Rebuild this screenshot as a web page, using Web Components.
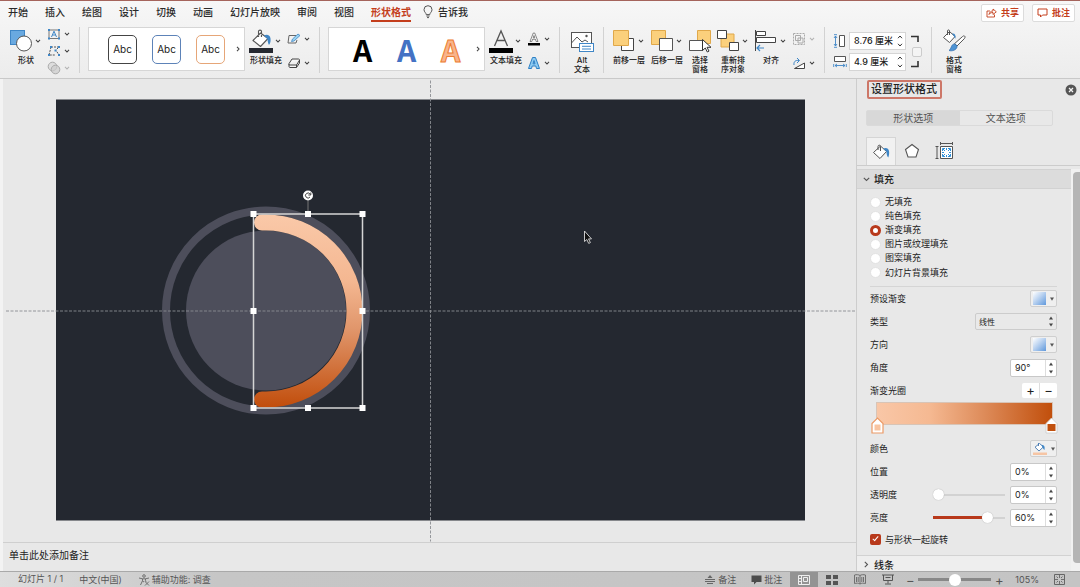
<!DOCTYPE html>
<html lang="zh-CN">
<head>
<meta charset="utf-8">
<title>设置形状格式</title>
<style>
html,body{margin:0;height:100%;overflow:hidden}
body{font:9px/14px Inter,"Noto Sans CJK SC",sans-serif;color:#222;background:#e8e8e8}
</style>
</head>
<body>
<deck-app></deck-app>
<script>
const BLUE = '#3f86c6', LINE = '#4a4a4a', GOLD = '#fbd07c';
const ICONS = {
  bulb: [10, 14, `<path d="M3.2 9.6C3.2 7.8 1 7 1 4.7a4 4 0 0 1 8 0C9 7 6.800 7.800 6.800 9.600zM3.400 11h3.200M4 12.600h2" fill="none" stroke="#555"/>`],
  share: [11, 10, `<path d="M4 3H1v6h7.500V6.500M3 6.500C3.500 4 5 3 7 3V1l3.300 2.800L7 6.500v-2C5.300 4.500 4 5 3 6.500z" fill="none" stroke="#c43e1c" stroke-width=".9"/>`],
  comment: [11, 10, `<path d="M1 1h9v6H5.500L3.500 9V7H1z" fill="none" stroke="#c43e1c"/>`],
  chev: [6, 4, `<path d="M1 .8 3 3 5 .8" fill="none" stroke="#444" stroke-width="1.100"/>`],
  chevOff: [6, 4, `<path d="M1 .8 3 3 5 .8" fill="none" stroke="#b4b4b4" stroke-width="1.100"/>`],
  next: [4, 6, `<path d="M1 .8 3 3 1 5.200" fill="none" stroke="#444" stroke-width="1.100"/>`],
  shapes: [24, 24, `<rect x="1.500" y="1.500" width="14" height="14" fill="#69a9e0" stroke="${BLUE}"/><circle cx="15" cy="14.500" r="7.500" fill="#fff" stroke="#555"/>`],
  textbox: [14, 12, `<rect x="2" y="2" width="10" height="8.500" fill="none" stroke="#777"/><path d="M4.500 9 7 3.200 9.500 9M5.400 7h3.200" fill="none" stroke="${BLUE}"/><path d="M1 1h2v2H1zM11 1h2v2h-2zM1 9.500h2v2H1zM11 9.500h2v2h-2z" fill="${BLUE}"/>`],
  points: [14, 12, `<path d="M4 2h8L8.500 5.500C10 6 10.500 8 12 10M4 2 2 10h6" fill="none" stroke="#555" stroke-dasharray="2 1"/><path d="M3 1h2v2H3zM11 1h2v2h-2zM1 9h2v2H1zM11 9h2v2h-2zM7.500 4.500h2v2h-2z" fill="${BLUE}"/>`],
  merge: [14, 14, `<circle cx="5.500" cy="5.500" r="4.300" fill="#ddd" stroke="#aaa"/><circle cx="8.500" cy="8.500" r="4.300" fill="#ccc" fill-opacity=".7" stroke="#aaa"/>`],
  bucket: [24, 24, `<path d="M11.500 4 4 11.500l7.500 6L19 9.500zM9.500 8V2.500c0-1.800 3-1.800 3 0V8" fill="#fff" stroke="#555" stroke-width="1.100" stroke-linejoin="round"/><path d="M15 6.500c3-1.500 6-.5 6.500 3 .3 2.500 0 4.500-1.500 6.500-1.500-2-1-5-2-6.500z" fill="${BLUE}"/><path d="M0 19h24v5H0z" fill="#252830"/>`],
  outline: [14, 12, `<path d="M9 2.500H2L1 10h8l1-3" fill="none" stroke="#666"/><path d="M4.500 8.500 5.500 6 11 1l2 1.500L7 8z" fill="#9bd3f0" stroke="${BLUE}" stroke-width=".8"/>`],
  effect: [14, 12, `<path d="M5 2h6.500c1 0 1.200.8.800 1.500L9.500 8H3C1.800 8 1.600 7.300 2 6.600zM2 7v2.500c0 .5.500 1 1 1h6.500L12.500 6V3M9.500 8v2.500" fill="#f5f5f5" stroke="#444" stroke-linejoin="round"/>`],
  textfill: [24, 24, `<path d="M5.500 17 12 2l6.500 15M8 11.500h8" fill="none" stroke="#555" stroke-width="1.300"/><path d="M0 19h24v5H0z" fill="#000"/>`],
  textline: [14, 14, `<path d="M3 9.500 6.300 1h1.400L11 9.500H9.200L8.400 7.200H5.600L4.800 9.500zM6.200 5.800h1.600L7 3.500z" fill="#fff" stroke="#555" stroke-width=".7"/><path d="M1 11h12v2.500H1z" fill="#000"/>`],
  texteffect: [14, 14, `<path d="M1.500 12.500 5.500 1.500h3l4 11h-3L8.800 10H5.200l-.7 2.500zM6 7.800h2L7 4.500z" fill="#8ecbf2" stroke="#2d7fc4"/>`],
  alt: [24, 24, `<rect x="1.500" y="3.500" width="20" height="15" fill="#fff" stroke="#555"/><path d="M1.500 14 7 8l5 5 3-2 3 2" fill="none" stroke="#555"/><circle cx="16.500" cy="7" r="1.200" fill="#555"/><rect x="9.500" y="14.500" width="14" height="8" fill="#fff" stroke="${BLUE}"/><path d="M12 17.300h9M12 20h9" stroke="${BLUE}"/>`],
  front: [24, 24, `<path d="M9.500 9.500h12v12h-12z" fill="#fff" stroke="#444"/><path d="M1.500 1.500h15v15h-15z" fill="${GOLD}" stroke="#e0a84a"/>`],
  back: [24, 24, `<path d="M1.500 1.500h14v14h-14z" fill="${GOLD}" stroke="#e0a84a"/><path d="M9.500 9.500h13v12h-13z" fill="#fff" stroke="#555"/>`],
  select: [24, 24, `<path d="M9.500 1.500h13v13h-13z" fill="${GOLD}" stroke="#e0a84a"/><path d="M1.500 11.500h13v10h-13z" fill="#fff" stroke="#555"/><path d="M14.500 10.500v11l2.800-2.500 2 4 1.700-.9-2-3.800h4z" fill="#fff" stroke="#333"/>`],
  reorder: [24, 24, `<path d="M5 5h13v13H5z" fill="${GOLD}" stroke="#e0a84a"/><path d="M1.500 1.500h9v8h-9zM13.500 13.500h9v8h-9z" fill="#fff" stroke="#444"/>`],
  align: [24, 24, `<path d="M1.500 1v21" stroke="#444"/><path d="M2.500 2.500h9v4h-9zM2.500 8.500h19v5h-19z" fill="#fff" stroke="#444"/><path d="M10 19H3M6 16l-3 3 3 3" fill="none" stroke="${BLUE}" stroke-width="1.200"/>`],
  group: [14, 14, `<path d="M1.500 1.500h11v11h-11z" fill="none" stroke="#aaa" stroke-dasharray="2 1"/><path d="M3.500 3.500h5v5h-5zM6 6h5v5H6z" fill="none" stroke="#aaa"/>`],
  rotate: [14, 12, `<path d="M2.500 11.500h10V6z" fill="#fff" stroke="#444"/><path d="M2 8C1.500 4.500 3.500 3 7 3.500M5 1l2.500 2.500L5 6" fill="none" stroke="${BLUE}"/>`],
  height: [14, 14, `<path d="M6.500 1.500h5v11h-5z" fill="#fff" stroke="#555"/><path d="M2.500 2v10M1 4l1.500-2L4 4M1 10l1.500 2L4 10M1 .7h3M1 13.300h3" fill="none" stroke="${BLUE}" stroke-width=".9"/>`],
  width: [14, 14, `<path d="M1.500 1.500h11v5h-11z" fill="#fff" stroke="#555"/><path d="M2 10.500h10M4 9l-2 1.500L4 12M10 9l2 1.500L10 12M.7 9v3M13.300 9v3" fill="none" stroke="${BLUE}" stroke-width=".9"/>`],
  cornerTop: [14, 7, `<path d="M1 1.500h7V7" fill="none" stroke="#333" stroke-width="1.600"/>`],
  cornerBottom: [14, 7, `<path d="M8 0v5.500H1" fill="none" stroke="#333" stroke-width="1.600"/>`],
  formatpane: [24, 24, `<path d="M7.500 2.500 1.500 8.500l6 5 5.500-6zM5.500 6V2c0-1.500 2-1.500 2 0v4" fill="#fff" stroke="#555"/><path d="M10 4.500c2.500-.5 4 1 3.500 5-1.500-.5-1-2-2-3z" fill="${BLUE}"/><path d="M22.500 7c1 .8.500 1.800-.3 2.800L15 17l-2.500-2.300L20 8c1-.8 1.700-1.500 2.500-1z" fill="#fff" stroke="#555"/><path d="M12.500 15c1.800.3 2.800 1.500 2.500 3-.5 3-5 4.500-8 3.500 2.500-1.500 2-6.500 5.500-6.500z" fill="#4f94d4" stroke="#2f6cac" stroke-width=".7"/>`],
  close: [12, 12, `<circle cx="6" cy="6" r="5.500" fill="#555"/><path d="m4 4 4 4M8 4 4 8" stroke="#f4f4f4" stroke-width="1.300"/>`],
  paint: [18, 16, `<path d="M8.500 2 1.500 8.500l6.500 6 6.500-7zM6 6V2.500c0-1.800 2.500-1.800 2.500 0V7" fill="#fff" stroke="#555" stroke-linejoin="round"/><path d="M11 4.500c3-1.300 5.500-.5 6 2.500.3 2 .2 4-.7 6.500-1.800-1.500-1.500-4.500-2-6z" fill="${BLUE}"/>`],
  pentagon: [16, 16, `<path d="M8 1.500 14.500 6.500 12 14H4L1.500 6.500z" fill="#fff" stroke="#555" stroke-width="1.100"/>`],
  sizeprops: [19, 18, `<path d="M5.500 4.500h12v12h-12z" fill="#fff" stroke="#555"/><path d="M2 4v13M.5 4.500h3M.5 16.500h3M5 1.500h13M5.500 0v3M17.500 0v3" stroke="#555"/><path d="M8 7l2 2M15 7l-2 2M8 14l2-2M15 14l-2-2M7.500 9V6.500H10M13 6.500h2.500V9M7.500 12v2.500H10M13 14.500h2.500V12M11.500 6v2M11.500 13v2M7 10.500h2M14 10.500h2" fill="none" stroke="#2f8fd6"/>`],
  swatch: [13, 13, `<defs><linearGradient id="g" x2="1" y2="1"><stop offset="0" stop-color="#fff"/><stop offset=".4" stop-color="#c3d8f2"/><stop offset="1" stop-color="#5f98dc"/></linearGradient></defs><path d="M0 0h13v13H0z" fill="url(#g)"/>`],
  tri: [4, 4, `<path d="M0 .5h4L2 3.800z" fill="#555"/>`],
  colorfill: [14, 13, `<path d="M6.500 1.500 2 5.200 6 9l4.500-4.200zM5.500 4V1" fill="#fff" stroke="#4477b0" stroke-width=".9"/><path d="M8.500 3c3 0 3.500 1.500 3 5-1.500-.8-1.300-2.200-2.200-3z" fill="${BLUE}"/><path d="M0 10.500h14V13H0z" fill="#f6c5a4"/>`],
  stopLight: [13, 17, `<path d="M1 6.500 6.500 1 12 6.500V16H1z" fill="#fff" stroke="#ec9a66" stroke-width="1.200"/><path d="M3.500 7.500h6v6h-6z" fill="#f8c4a1"/>`],
  stopDark: [13, 17, `<path d="M1 6.500 6.500 1 12 6.500V16H1z" fill="#fff" stroke="#ccc" stroke-width=".8"/><path d="M2.500 7h8v7h-8z" fill="#c1510f"/>`],
  down: [7, 5, `<path d="M.8.800 3.500 3.500 6.200.8" fill="none" stroke="#555" stroke-width="1.100"/>`],
  right: [5, 7, `<path d="M.8.800 3.500 3.500.8 6.200" fill="none" stroke="#555" stroke-width="1.100"/>`],
  access: [12, 12, `<circle cx="6" cy="2" r="1.300" fill="none" stroke="#666" stroke-width=".9"/><path d="M1 4l3.500.8v2L2.500 11M11 4l-3.500.8v1.500L8 8M4.500 4.800h3M4.500 7 6 8M7 7.500l4 4M11 7.500l-4 4" fill="none" stroke="#666" stroke-width=".9"/>`],
  notes: [12, 11, `<path d="M1 5.500h10M1 7.500h10M3 9.500h6" stroke="#666"/><path d="M3.500 4 6 1l2.500 3z" fill="#666"/>`],
  bubble: [11, 10, `<path d="M.5.500h10v6.500H5.500L3 9.500V7H.5z" fill="#4c4c4c"/>`],
  normal: [12, 10, `<path d="M.5.500h11v9H.5zM3.500.5v9M.5 3.500h3M.5 6.500h3" fill="none" stroke="#eee"/><path d="M5.500 2.500h4v4h-4z" fill="none" stroke="#eee"/>`],
  sorter: [12, 10, `<path d="M0 0h5v4H0zM7 0h5v4H7zM0 6h5v4H0zM7 6h5v4H7z" fill="#555"/>`],
  book: [12, 11, `<path d="M6 1.500C4.500.5 2.500.5.500 1v8.500c2-.5 4-.5 5.500.5 1.500-1 3.500-1 5.500-.5V1C9.500.5 7.500.5 6 1.500zV10M2.500 3v5M4.200 3v5M7.800 3v5M9.500 3v5" fill="none" stroke="#666" stroke-width=".9"/>`],
  show: [12, 11, `<path d="M0 1h12M1.500 1v5.500h9V1M6 6.500v3M3 10h6M3.500 3.500h5" fill="none" stroke="#555"/>`],
  fit: [11, 11, `<path d="M.5.500h10v10H.5z" fill="none" stroke="#666"/><path d="M5.500 1v3M5.500 7v3M1 5.500h3M7 5.500h3M2.500 2.500l1.500 1.500M8.500 2.500 7 4M2.500 8.500 4 7M8.500 8.500 7 7" stroke="#666" stroke-width=".9"/>`]
};

function define(name, html, ready) {
  const t = document.createElement('template');
  t.innerHTML = html;
  customElements.define(name, class extends HTMLElement {
    connectedCallback() {
      if (this.shadowRoot) return;
      this.attachShadow({mode: 'open'}).append(t.content.cloneNode(true));
      if (ready) ready(this, this.shadowRoot);
    }
  });
}
const BASE = `:host,*{box-sizing:border-box}button,input,select{font:inherit;color:inherit;margin:0;padding:0;border:0;background:none;outline:0}`;

customElements.define('ui-icon', class extends HTMLElement {
  connectedCallback() {
    if (this.shadowRoot) return;
    const [w, h, body] = ICONS[this.getAttribute('name')];
    this.attachShadow({mode: 'open'}).innerHTML =
      `<style>:host{display:block;flex:none}svg{display:block}</style><svg width="${w}" height="${h}" viewBox="0 0 ${w} ${h}" aria-hidden="true">${body}</svg>`;
  }
});

/* Large ribbon button: icon, optional arrow and a caption below */
define('ribbon-tool', `<style>${BASE}
:host{display:block;width:34px;flex:none;padding-top:2px}
:host([plain]){width:28px}:host([narrow]){width:24px}
button{display:flex;flex-direction:column;align-items:center;width:100%;gap:3px;font-size:8px;line-height:9px;white-space:nowrap;color:#222;font-weight:500}
.top{display:flex;align-items:center;justify-content:center;width:100%;height:24px}
.arrow{flex:1;display:flex;justify-content:center}
:host([plain]) .arrow,:host([narrow]) .arrow{display:none}
</style><button><span class="top"><slot name="icon"></slot><span class="arrow"><ui-icon name="chev"></ui-icon></span></span><slot></slot></button>`);

/* Small ribbon button: icon and arrow only */
define('mini-tool', `<style>${BASE}
:host{display:block}button{display:flex;align-items:center;width:25px;height:14px}
.i{width:15px}.a{width:10px;display:flex;justify-content:center}
</style><button><span class="i"></span><span class="a"></span></button>`, (el, root) => {
  root.querySelector('button').setAttribute('aria-label', el.getAttribute('label'));
  root.querySelector('.i').innerHTML = `<ui-icon name="${el.getAttribute('icon')}"></ui-icon>`;
  root.querySelector('.a').innerHTML = `<ui-icon name="${el.hasAttribute('off') ? 'chevOff' : 'chev'}"></ui-icon>`;
});
define('mini-stack', `<style>:host{display:flex;flex-direction:column;height:48px;justify-content:space-between;flex:none}
:host([pair]){justify-content:space-around}</style><slot></slot>`);
define('ribbon-rule', `<style>:host{display:block;width:1px;height:46px;background:#d2d2d2;margin:0 4px 0 3px;flex:none}</style>`);
define('style-gallery', `<style>${BASE}
:host{display:flex;align-items:center;width:157px;height:44px;border:1px solid #d6d6d6;background:#fff;flex:none}
.items{display:flex;flex:1;justify-content:center;gap:15px;padding-left:12px}
.more{width:12px;height:100%;display:flex;align-items:center;justify-content:center}
</style><div class="items"><slot></slot></div><button class="more" aria-label="更多样式"><ui-icon name="next"></ui-icon></button>`);

define('spin-arrows', `<style>${BASE}
:host{display:flex;flex-direction:column;align-self:stretch;width:11px;flex:none}
button{flex:1;display:flex;align-items:center;justify-content:center}
svg{display:block}.t{display:none}
:host([solid]){border-left:1px solid #ddd}:host([solid]) .t{display:block}:host([solid]) .c{display:none}
</style><button aria-label="增大"><svg width="6" height="4"><path class="c" d="M1 3.200 3 1l2 2.200" fill="none" stroke="#333"/><path class="t" d="M1 3.500h4L3 .5z" fill="#444"/></svg></button>
<button aria-label="减小"><svg width="6" height="4"><path class="c" d="M1 .8 3 3 5 .8" fill="none" stroke="#333"/><path class="t" d="M1 .5h4L3 3.500z" fill="#444"/></svg></button>`);

define('tab-strip', `<style>${BASE}
:host{display:flex;align-items:center;height:25px;padding:0 5px 0 8px;border-top:1px solid #a5645c;flex:none}
nav{display:flex;gap:17px;flex:1}
nav button{font-size:10px;line-height:16px;height:18px;border-bottom:2px solid transparent;font-weight:500;white-space:nowrap;color:#2a2a2a}
nav .on{color:#c43e1c;border-color:#c43e1c;font-weight:700}
.tell{display:flex;align-items:center;gap:5px;margin-left:-5px}
.right{display:flex;gap:8px}
.right button{display:flex;align-items:center;justify-content:center;gap:4px;width:43px;height:18px;border:1px solid #dcdcdc;border-radius:2px;background:#fff;color:#c43e1c;font-size:9px;font-weight:700}
</style>
<nav><button>开始</button><button>插入</button><button>绘图</button><button>设计</button><button>切换</button><button>动画</button><button>幻灯片放映</button><button>审阅</button><button>视图</button><button class="on">形状格式</button><button class="tell"><ui-icon name="bulb"></ui-icon>告诉我</button></nav>
<div class="right"><button><ui-icon name="share"></ui-icon>共享</button><button><ui-icon name="comment"></ui-icon>批注</button></div>`);

define('ribbon-bar', `<style>${BASE}
:host{display:flex;align-items:flex-start;gap:4px;height:54px;padding:2px 8px 0 9px;border-bottom:1px solid #c9c9c9;flex:none}
.sw{width:29px;height:29px;border:1px solid #444;border-radius:5px;font-size:10px;background:#fff}
.blue{border-color:#5d83b8}.orange{border-color:#e6a678}
.wa{width:29px;height:34px;font:700 30px/34px "Noto Sans CJK SC",sans-serif;color:#000}
.w2{color:#4472c4}.w3{color:#f8b48c;-webkit-text-stroke:1px #ed7d31}
.size{display:grid;grid-template-columns:14px 57px;column-gap:2px;row-gap:3px;align-items:center;padding-top:5px}
.box{display:flex;height:18px;border:1px solid #d5d5d5;background:#fff;font-size:9px}
.box input{flex:1;min-width:0;padding-left:4px;font-weight:500}
.lock{display:flex;flex-direction:column;justify-content:space-between;width:14px;height:33px;margin-top:8px}
.lock input{appearance:none;width:10px;height:10px;align-self:center;border:1px solid #ccc;border-radius:2px;background:#f4f4f4}
</style>
<ribbon-tool><ui-icon slot="icon" name="shapes"></ui-icon>形状</ribbon-tool>
<mini-stack><mini-tool icon="textbox" label="文本框"></mini-tool><mini-tool icon="points" label="编辑形状"></mini-tool><mini-tool icon="merge" label="合并形状" off></mini-tool></mini-stack>
<ribbon-rule></ribbon-rule>
<style-gallery><button class="sw">Abc</button><button class="sw blue">Abc</button><button class="sw orange">Abc</button></style-gallery>
<ribbon-tool><ui-icon slot="icon" name="bucket"></ui-icon>形状填充</ribbon-tool>
<mini-stack pair><mini-tool icon="outline" label="形状轮廓"></mini-tool><mini-tool icon="effect" label="形状效果"></mini-tool></mini-stack>
<ribbon-rule></ribbon-rule>
<style-gallery><button class="wa">A</button><button class="wa w2">A</button><button class="wa w3">A</button></style-gallery>
<ribbon-tool><ui-icon slot="icon" name="textfill"></ui-icon>文本填充</ribbon-tool>
<mini-stack pair><mini-tool icon="textline" label="文本轮廓"></mini-tool><mini-tool icon="texteffect" label="文本效果"></mini-tool></mini-stack>
<ribbon-rule></ribbon-rule>
<ribbon-tool plain><ui-icon slot="icon" name="alt"></ui-icon><span>Alt<br>文本</span></ribbon-tool>
<ribbon-rule></ribbon-rule>
<ribbon-tool><ui-icon slot="icon" name="front"></ui-icon>前移一层</ribbon-tool>
<ribbon-tool><ui-icon slot="icon" name="back"></ui-icon>后移一层</ribbon-tool>
<ribbon-tool narrow><ui-icon slot="icon" name="select"></ui-icon><span>选择<br>窗格</span></ribbon-tool>
<ribbon-tool><ui-icon slot="icon" name="reorder"></ui-icon><span>重新排<br>序对象</span></ribbon-tool>
<ribbon-tool><ui-icon slot="icon" name="align"></ui-icon>对齐</ribbon-tool>
<mini-stack pair><mini-tool icon="group" label="组合" off></mini-tool><mini-tool icon="rotate" label="旋转"></mini-tool></mini-stack>
<ribbon-rule></ribbon-rule>
<div class="size">
<label for="h" aria-label="高度"><ui-icon name="height"></ui-icon></label><div class="box"><input id="h" value="8.76 厘米"><spin-arrows></spin-arrows></div>
<label for="w" aria-label="宽度"><ui-icon name="width"></ui-icon></label><div class="box"><input id="w" value="4.9 厘米"><spin-arrows></spin-arrows></div>
</div>
<div class="lock"><ui-icon name="cornerTop"></ui-icon><input type="checkbox" aria-label="锁定纵横比"><ui-icon name="cornerBottom"></ui-icon></div>
<ribbon-rule></ribbon-rule>
<ribbon-tool plain><ui-icon slot="icon" name="formatpane"></ui-icon><span>格式<br>窗格</span></ribbon-tool>`);

/* Slide, guides and the selected arc */
define('slide-stage', `<style>${BASE}
:host{display:flex;flex-direction:column;flex:1;min-width:0;border-left:3px solid #f3f3f3;overflow:hidden}
.stage{flex:1;min-height:0;padding:20px 51px 21px 53px}
svg{display:block;width:100%;height:100%;overflow:visible}
.notes{height:29px;flex:none;border-top:1px solid #cfcfcf;padding:4px 6px;font-size:10px;line-height:16px}
</style>
<div class="stage"><svg viewBox="0 0 749 421" role="img" aria-label="幻灯片">
<defs><linearGradient id="arc" gradientUnits="userSpaceOnUse" x1="0" y1="114" x2="0" y2="308"><stop offset="0" stop-color="#fac9a9"/><stop offset=".35" stop-color="#f4b791"/><stop offset=".6" stop-color="#e0956a"/><stop offset="1" stop-color="#c14d0b"/></linearGradient></defs>
<rect width="749" height="421" fill="#242830"/>
<circle cx="210" cy="211" r="100" fill="none" stroke="#4d4e5b" stroke-width="8"/><circle cx="210" cy="211" r="80" fill="#4d4e5b"/>
<path d="M374.500-19V442M-50 211.500H801" stroke="#8b8d92" stroke-dasharray="3 1.500" fill="none" stroke-width=".9"/>
<path d="M206 123h4a88.500 88.500 0 0 1 0 177h-4" fill="none" stroke="url(#arc)" stroke-width="16" stroke-linecap="round"/>
<path d="M252 101v13" stroke="#777"/><path d="M197.500 114.500h109v194h-109z" fill="none" stroke="#d5d5d5" stroke-width="1.500"/>
<path d="M194.500 111.500h6v6h-6zM249 111.500h6v6h-6zM303.500 111.500h6v6h-6zM194.500 208.500h6v6h-6zM303.500 208.500h6v6h-6zM194.500 305.500h6v6h-6zM249 305.500h6v6h-6zM303.500 305.500h6v6h-6z" fill="#fff"/>
<circle cx="252" cy="96" r="5" fill="#fff"/><path d="M254.300 95A2.500 2.500 0 1 0 254 97.500M254.800 93v2.500h-2.500" fill="none" stroke="#444"/>
<path d="M528.500 131.500v10.500l2.300-2 1.900 3.900 1.700-.8-1.900-3.700h3z" fill="#111" stroke="#ddd" stroke-width=".9"/>
</svg></div><div class="notes">单击此处添加备注</div>`);

define('pane-row', `<style>:host{display:flex;align-items:center;height:23px;gap:4px}.g{flex:1}</style><slot name="label"></slot><span class="g"></span><slot></slot>`);
define('pane-section', `<style>${BASE}:host{display:block}
button{display:flex;align-items:center;gap:4px;width:100%;height:20px;padding-left:6px;background:#dcdcdc;border-top:1px solid #d2d2d2;border-bottom:1px solid #d2d2d2;font-size:10px;font-weight:500}
:host([closed]) button{background:#eee;height:18px;border-bottom:0}
.d{width:7px;display:flex;justify-content:center}</style><button><span class="d"></span><slot name="title"></slot></button><slot></slot>`, (el, root) => {
  root.querySelector('.d').innerHTML = `<ui-icon name="${el.hasAttribute('closed') ? 'right' : 'down'}"></ui-icon>`;
});

define('format-pane', `<style>${BASE}
:host{display:flex;flex-direction:column;width:224px;flex:none;border-left:1px solid #cdcdcd;overflow:hidden}
header{display:flex;justify-content:space-between;align-items:center;padding:1px 3px 0 10px}
h2{margin:0;font-size:11px;line-height:15px;font-weight:500;border:2px solid #cd7768;border-radius:2px;padding:0 3px 0 2px}
.seg{display:flex;margin:11px 27px 0 9px;height:16px;border:1px solid #dadada;border-radius:2px}
.seg button{flex:1;font-size:10px;line-height:14px;color:#555}.seg .on{background:#d8d8d8}
.tabs{display:flex;padding-left:9px;margin-top:11px;border-bottom:1px solid #ccc;height:29px}
.tabs button{width:32px;display:flex;align-items:center;justify-content:center}
.tabs .on{width:30px;background:#f1f1f1;border:1px solid #d5d5d5;border-bottom:0}
.scroll{display:flex;flex:1;min-height:0;padding-top:3px}
.body{flex:1;min-width:0}
.bar{width:9px;background:#f1f1f1;padding:3px 0 8px 2px;flex:none}.bar i{display:block;height:100%;background:#b5b5b5;border-radius:4px 0 0 4px}
.in{padding:6px 14px 0 13px}
fieldset{margin:0;padding:0 0 6px;border:0;border-bottom:1px solid #d5d5d5}
fieldset label{display:flex;align-items:center;gap:4px;height:14px}
fieldset label:last-child{height:15px}
input[type=radio]{appearance:none;width:11px;height:11px;border-radius:50%;background:#fff;border:1px solid #e2e2e2}
input[type=radio]:checked{border:3px solid #b8391b;background:#fff}
.pick{display:flex;align-items:center;justify-content:center;gap:4px;width:27px;height:17px;border:1px solid #cfcfcf;border-radius:2px;background:#efefef}
.sel{position:relative;display:flex;width:82px;height:17px;border:1px solid #ccc;border-radius:2px;background:#e9e9e9}
.sel select{appearance:none;flex:1;padding-left:3px;font-size:8px}
.sel spin-arrows{position:absolute;right:0;top:0;bottom:0;border:0;pointer-events:none}
.spin{display:flex;width:47px;height:18px;border:1px solid #c8c8c8;border-radius:2px;background:#fff}
.spin input{flex:1;min-width:0;padding-left:4px}
.pm{display:flex;width:35px;height:15px;background:#fff;border-radius:2px}.pm button{flex:1;font-size:13px;line-height:13px}.pm button+button{border-left:1px solid #ddd}
.stops{margin-left:2px;padding:0 4px;height:35px;display:flex;flex-direction:column}
.ramp{height:23px;border:1px solid #d8c4b6;background:linear-gradient(90deg,#f9c7a7,#f5b992 30%,#dd8a58 62%,#c14f0c)}
.knobs{display:flex;justify-content:space-between;margin:-8px -5px 0}
input[type=range]{appearance:none;width:72px;height:12px;margin-right:1px;background:linear-gradient(#b8391b,#b8391b) 0 50%/var(--v) 3px no-repeat,linear-gradient(#d2d2d2,#d2d2d2) 0 50%/100% 2px no-repeat}
input[type=range]::-webkit-slider-thumb{appearance:none;width:11px;height:11px;border-radius:50%;background:#fff;box-shadow:0 0 1px #999}
.check{display:flex;align-items:center;gap:4px;height:26px;padding-bottom:5px}
.check input{appearance:none;width:11px;height:11px;border-radius:2px;background:#b8391b;position:relative}
.check input::after{content:"";position:absolute;left:4px;top:1px;width:2px;height:5px;border:solid #fff;border-width:0 1px 1px 0;box-sizing:content-box;transform:rotate(40deg)}
</style>
<header><h2>设置形状格式</h2><button aria-label="关闭"><ui-icon name="close"></ui-icon></button></header>
<div class="seg"><button class="on">形状选项</button><button>文本选项</button></div>
<div class="tabs"><button class="on" aria-label="填充与线条"><ui-icon name="paint"></ui-icon></button><button aria-label="效果"><ui-icon name="pentagon"></ui-icon></button><button aria-label="大小与属性"><ui-icon name="sizeprops"></ui-icon></button></div>
<div class="scroll"><div class="body">
<pane-section><span slot="title">填充</span><div class="in">
<fieldset aria-label="填充"><label><input type="radio" name="f">无填充</label><label><input type="radio" name="f">纯色填充</label><label><input type="radio" name="f" checked>渐变填充</label><label><input type="radio" name="f">图片或纹理填充</label><label><input type="radio" name="f">图案填充</label><label><input type="radio" name="f">幻灯片背景填充</label></fieldset>
<pane-row><label slot="label" for="preset">预设渐变</label><button class="pick" id="preset"><ui-icon name="swatch"></ui-icon><ui-icon name="tri"></ui-icon></button></pane-row>
<pane-row><label slot="label" for="type">类型</label><span class="sel"><select id="type"><option>线性</option></select><spin-arrows solid></spin-arrows></span></pane-row>
<pane-row><label slot="label" for="dir">方向</label><button class="pick" id="dir"><ui-icon name="swatch"></ui-icon><ui-icon name="tri"></ui-icon></button></pane-row>
<pane-row><label slot="label" for="angle">角度</label><span class="spin"><input id="angle" value="90°"><spin-arrows solid></spin-arrows></span></pane-row>
<pane-row><span slot="label">渐变光圈</span><span class="pm"><button>+</button><button>−</button></span></pane-row>
<div class="stops"><div class="ramp"></div><div class="knobs"><ui-icon name="stopLight"></ui-icon><ui-icon name="stopDark"></ui-icon></div></div>
<pane-row><label slot="label" for="color">颜色</label><button class="pick" id="color"><ui-icon name="colorfill"></ui-icon><ui-icon name="tri"></ui-icon></button></pane-row>
<pane-row><label slot="label" for="pos">位置</label><span class="spin"><input id="pos" value="0%"><spin-arrows solid></spin-arrows></span></pane-row>
<pane-row><label slot="label" for="alpha">透明度</label><input type="range" value="0" style="--v:0%" aria-label="透明度"><span class="spin"><input id="alpha" value="0%"><spin-arrows solid></spin-arrows></span></pane-row>
<pane-row><label slot="label" for="lum">亮度</label><input type="range" value="80" style="--v:75%" aria-label="亮度"><span class="spin"><input id="lum" value="60%"><spin-arrows solid></spin-arrows></span></pane-row>
<label class="check"><input type="checkbox" checked>与形状一起旋转</label>
</div></pane-section>
<pane-section closed><span slot="title">线条</span></pane-section>
</div><div class="bar"><i></i></div></div>`);

define('status-bar', `<style>${BASE}
:host{display:flex;align-items:center;height:16px;padding:0 15px 0 18px;background:linear-gradient(90deg,#dedede,#c6c6c6 20%,#c4c4c4);border-top:1px solid #a9a9a9;color:#555;font-size:9px;line-height:14px;flex:none;white-space:nowrap}
.l{display:flex;gap:16px;flex:1}.l button,.r button{display:flex;align-items:center;gap:2px;height:15px}
.r{display:flex;align-items:center;gap:15px}
.views{display:flex}.views button{width:28px;justify-content:center}.views .on{background:#939393}
.zoom{display:flex;align-items:center;gap:4px}.zoom button{font-size:13px;width:8px;justify-content:center}
input{appearance:none;width:73px;height:13px;background:linear-gradient(#888,#888) 0 50%/100% 3px no-repeat}
input::-webkit-slider-thumb{appearance:none;width:12px;height:12px;border-radius:50%;background:#fff}
.views{margin-left:-7px}.zoom{margin-left:-11px}.pct{margin-left:-3px}
</style><div class="l"><span>幻灯片 1 / 1</span><button>中文(中国)</button><button><ui-icon name="access"></ui-icon>辅助功能: 调查</button></div>
<div class="r"><button><ui-icon name="notes"></ui-icon>备注</button><button><ui-icon name="bubble"></ui-icon>批注</button>
<div class="views"><button class="on" aria-label="普通"><ui-icon name="normal"></ui-icon></button><button aria-label="浏览"><ui-icon name="sorter"></ui-icon></button><button aria-label="阅读"><ui-icon name="book"></ui-icon></button><button aria-label="放映"><ui-icon name="show"></ui-icon></button></div>
<div class="zoom"><button>−</button><input type="range" value="50" aria-label="缩放"><button>+</button></div><span class="pct">105%</span><button aria-label="适应窗口"><ui-icon name="fit"></ui-icon></button></div>`);

define('deck-app', `<style>:host{display:flex;flex-direction:column;height:100vh;background:#e8e8e8}
.top{background:linear-gradient(#f7f7f7,#ececec)}main{display:flex;flex:1;min-height:0}</style>
<div class="top"><tab-strip></tab-strip><ribbon-bar></ribbon-bar></div>
<main><slide-stage></slide-stage><format-pane></format-pane></main><status-bar></status-bar>`);
</script>
</body>
</html>
